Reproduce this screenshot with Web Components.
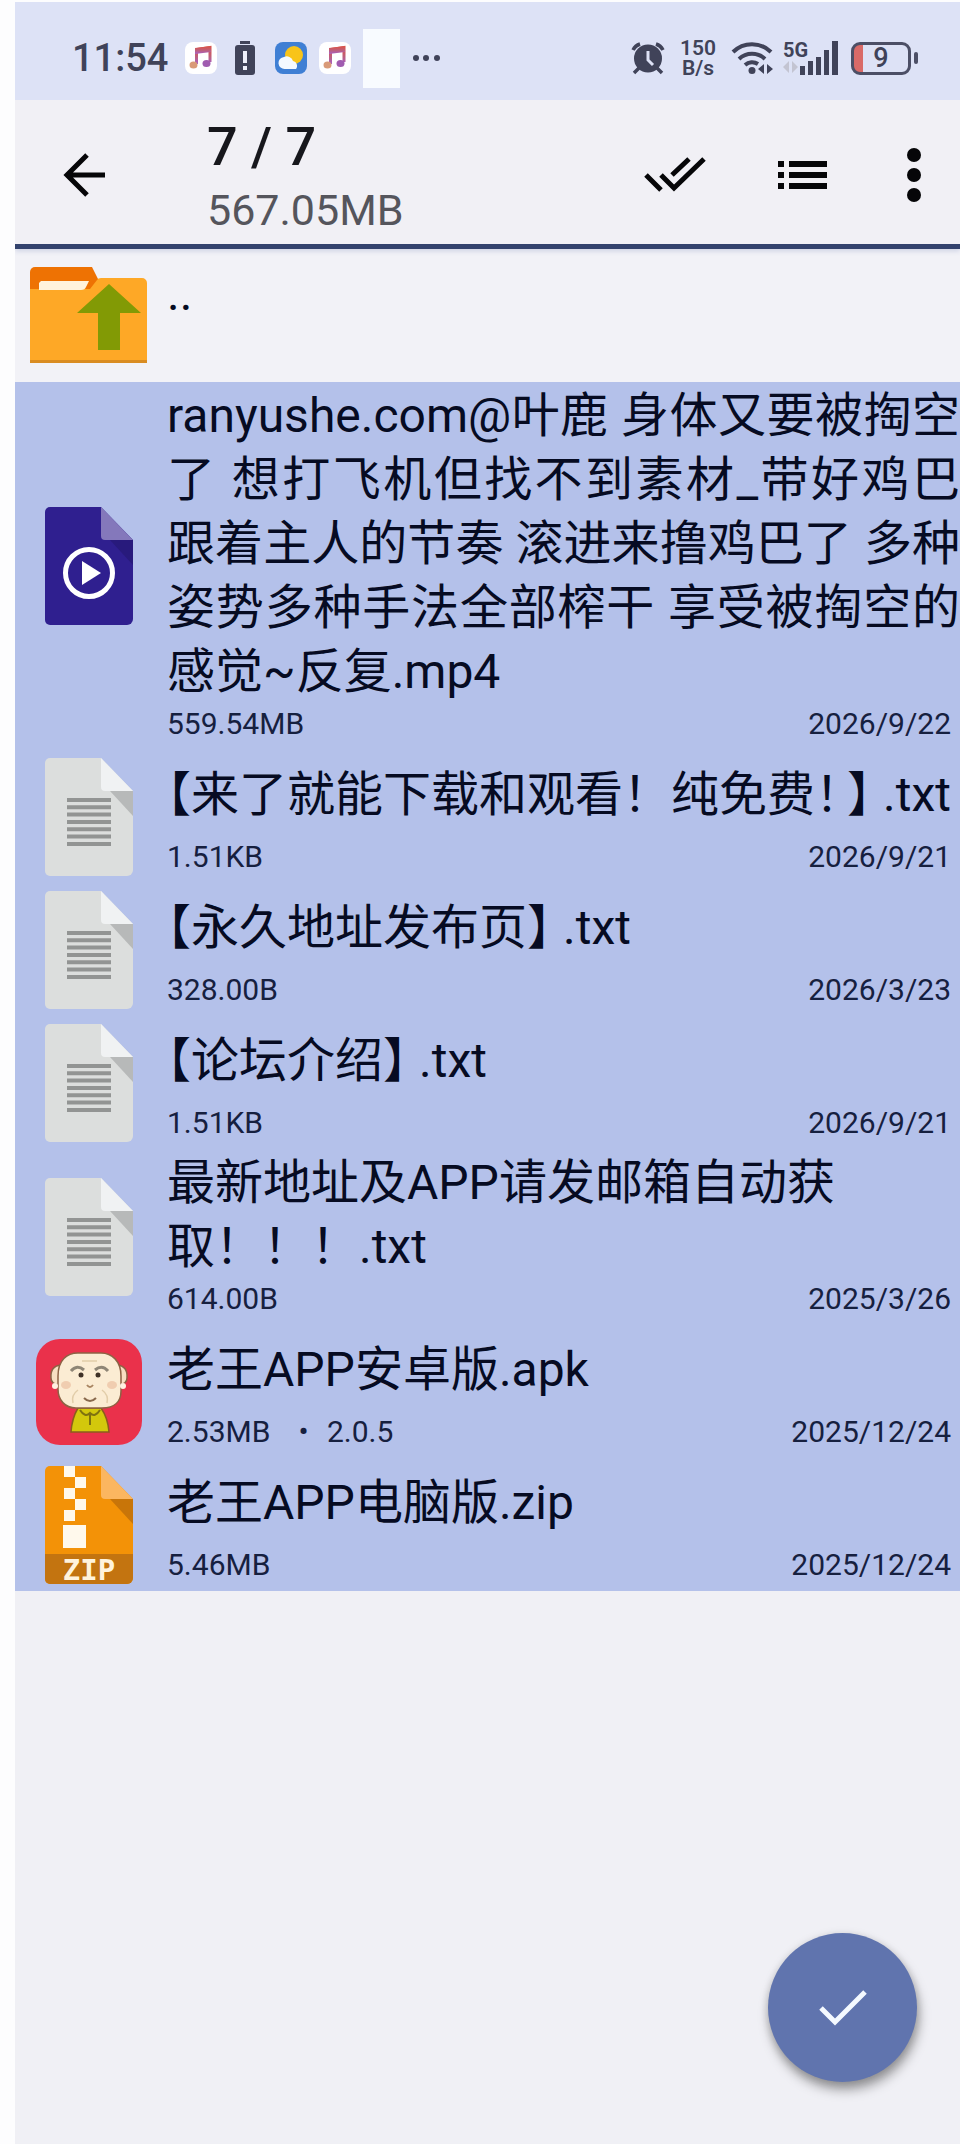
<!DOCTYPE html>
<html lang="zh-CN">
<head>
<meta charset="utf-8">
<meta name="viewport" content="width=device-width, initial-scale=1">
<title>文件选择</title>
<style>
  body { margin: 0; background: #fdfdfe; font-family: Roboto, "Noto Sans CJK SC", sans-serif; color: #060b22; text-autospace: no-autospace; text-spacing-trim: space-all; }
  .half { font-feature-settings: "halt"; }
  .half.mark { margin-inline-end: 8px; }
  .half.close { margin-inline-end: 12px; }
  .dot { margin-inline-end: 11px; }
</style>
</head>
<body>
<file-app>
  <status-bar slot="status"></status-bar>
  <selection-bar slot="header">
    <span slot="count">7 / 7</span>
    <span slot="size">567.05MB</span>
  </selection-bar>
  <file-row><file-icon slot="icon" kind="up"></file-icon>..</file-row>
  <file-row selected justified><file-icon slot="icon" kind="video"></file-icon>ranyushe.com@叶鹿 身体又要被掏空了 想打飞机但找不到素材_带好鸡巴 跟着主人的节奏 滚进来撸鸡巴了 多种姿势多种手法全部榨干 享受被掏空的感觉~反复.mp4<span slot="size">559.54MB</span><time slot="date">2026/9/22</time></file-row>
  <file-row selected><file-icon slot="icon" kind="text"></file-icon><span class="half">【</span>来了就能下载和观看！纯免费<span class="half mark">！</span><span class="half close">】</span>.txt<span slot="size">1.51KB</span><time slot="date">2026/9/21</time></file-row>
  <file-row selected><file-icon slot="icon" kind="text"></file-icon><span class="half">【</span>永久地址发布页<span class="half close">】</span>.txt<span slot="size">328.00B</span><time slot="date">2026/3/23</time></file-row>
  <file-row selected><file-icon slot="icon" kind="text"></file-icon><span class="half">【</span>论坛介绍<span class="half close">】</span>.txt<span slot="size">1.51KB</span><time slot="date">2026/9/21</time></file-row>
  <file-row selected><file-icon slot="icon" kind="text"></file-icon>最新地址及APP请发邮箱自动获取！！！.txt<span slot="size">614.00B</span><time slot="date">2025/3/26</time></file-row>
  <file-row selected><file-icon slot="icon" kind="apk"></file-icon>老王APP安卓版.apk<span slot="size">2.53MB</span><span slot="version"><span class="dot">• </span>2.0.5</span><time slot="date">2025/12/24</time></file-row>
  <file-row selected><file-icon slot="icon" kind="zip"></file-icon>老王APP电脑版.zip<span slot="size">5.46MB</span><time slot="date">2025/12/24</time></file-row>
  <confirm-button slot="action"></confirm-button>
</file-app>

<script>
  const define = (name, html, setup) => customElements.define(name, class extends HTMLElement {
    constructor() {
      super();
      this.attachShadow({ mode: 'open' }).innerHTML = html;
      if (setup) setup(this);
    }
  });

  define('file-app', `
    <style>
      :host { display: block; box-sizing: border-box; min-height: 100vh; padding: 2px 0 0 15px; background: linear-gradient(#f0f0f5, #f0f0f5) 15px 2px no-repeat, #fdfdfe; }
    </style>
    <slot name="status"></slot>
    <slot name="header"></slot>
    <main><slot></slot></main>
    <slot name="action"></slot>`);

  const note = (id) => `
    <svg width="32" height="32" viewBox="0 0 32 32" aria-hidden="true">
      <defs><linearGradient id="${id}" x1="0" y1="0" x2="0" y2="1"><stop offset=".1" stop-color="#d8544c"/><stop offset=".55" stop-color="#bd5f7c"/><stop offset="1" stop-color="#a85fc4"/></linearGradient></defs>
      <rect width="32" height="32" rx="8" fill="#fff"/>
      <path fill="none" stroke="url(#${id})" stroke-width="3" d="M11.500 22 V7.500 L25 5.500 V20"/>
      <path fill="url(#${id})" d="M10 6 26 4V10L10 12z"/>
      <ellipse cx="8.500" cy="23" rx="4" ry="3.500" fill="#d99a78"/>
      <ellipse cx="21.500" cy="21.500" rx="4" ry="3.500" fill="#a05cb0"/>
    </svg>`;

  define('status-bar', `
    <style>
      :host { display: flex; align-items: center; box-sizing: border-box; height: 98px; padding: 14px 42px 0 57px; background: #dde2f6; color: #404359; }
      svg { display: block; flex: none; }
      .clock { font-size: 38px; line-height: 40px; font-weight: 500; width: 113px; flex: none; }
      .left { display: flex; align-items: center; height: 60px; }
      .apps { display: flex; align-items: center; gap: 12px; }
      .blank { width: 37px; height: 59px; background: #f8fbff; }
      .right { display: flex; align-items: center; margin-left: auto; height: 36px; }
      .rate { font-size: 21px; font-weight: 600; text-align: center; width: 38px; margin: 0 14px; }
      .rate span { display: block; line-height: 20px; }
      .cell { display: grid; grid-template-columns: 16px 40px; margin-left: 10px; height: 34px; width: 56px; }
      .cell b { font-size: 20px; line-height: 18px; font-weight: 700; }
      .cell .bars { grid-column: 2; grid-row: 1 / 3; }
      .cell b, .cell .data { grid-column: 1; }
      .battery { display: flex; align-items: center; margin-left: 12px; gap: 3px; }
      .shell { box-sizing: border-box; width: 60px; height: 33px; border: 3px solid #4c4f66; border-radius: 9px; background: linear-gradient(90deg, #d96a68 9px, transparent 9px); font-size: 27px; line-height: 27px; text-align: center; font-weight: 500; }
      .nub { width: 4px; height: 12px; border-radius: 2px; background: #4c4f66; }
    </style>
    <div class="left">
      <span class="clock">11:54</span>
      <div class="apps">
        ${note('n1')}
        <svg width="34" height="36" viewBox="0 0 34 36" aria-hidden="true"><rect x="11" y="1" width="10" height="3" fill="#404359"/><rect x="6" y="5" width="20" height="30" rx="3" fill="#404359"/><path d="M16 11v12M16 26v4" stroke="#eef0fb" stroke-width="4"/></svg>
        <svg width="32" height="32" viewBox="0 0 32 32" aria-hidden="true"><rect width="32" height="32" rx="8" fill="#3f7fd4"/><circle cx="19" cy="13" r="9" fill="#f8c419"/><path d="M10 27a6 6 0 0 1-1-12 6.500 6.500 0 0 1 9 4 5 5 0 0 1 3 8z" fill="#f4f9ff"/></svg>
        ${note('n2')}
        <span class="blank"></span>
        <svg width="30" height="8" viewBox="0 0 30 8" aria-hidden="true" fill="#404359"><circle cx="4" cy="4" r="3"/><circle cx="14" cy="4" r="3"/><circle cx="25" cy="4" r="3"/></svg>
      </div>
    </div>
    <div class="right">
      <svg width="34" height="34" viewBox="0 0 34 34" aria-hidden="true"><circle cx="17" cy="17.500" r="14" fill="#404359"/><path d="M2 9a12 12 0 0 1 7-6M25 3a12 12 0 0 1 7 6M8 27l-5 5M26 27l5 5" stroke="#404359" stroke-width="3.500" fill="none"/><path d="M17 10v9l5 5" stroke="#dde2f6" stroke-width="3" fill="none"/></svg>
      <div class="rate"><span>150</span><span>B/s</span></div>
      <svg width="42" height="34" viewBox="0 0 42 34" aria-hidden="true"><g fill="none" stroke="#404359" stroke-width="4"><path d="M2 11a27 27 0 0 1 38 0"/><path d="M8 18a19 19 0 0 1 26 0"/><path d="M14 24a11 11 0 0 1 13-1"/></g><circle cx="21" cy="29.500" r="3.500" fill="#404359"/><path fill="#404359" d="M33 23v10l-6-5zM36 23v10l6-5z"/></svg>
      <div class="cell">
        <b>5G</b>
        <svg class="data" width="16" height="14" viewBox="0 0 16 14" aria-hidden="true"><path fill="#c3c4d2" d="M6 1v12L0 7zM9 1v12l6-6z"/></svg>
        <svg class="bars" width="40" height="34" viewBox="0 0 40 34" aria-hidden="true"><path fill="#404359" d="M1 25h5v9H1zM9 20h5v14H9zM17 16h5v18h-5zM25 9h5v25h-5zM33 0h6v34h-6z"/></svg>
      </div>
      <div class="battery"><div class="shell">9</div><span class="nub"></span></div>
    </div>`);

  define('selection-bar', `
    <style>
      :host { display: flex; align-items: center; box-sizing: border-box; height: 149px; padding: 6px 32px 0 48px; background: #f1f0f5; border-bottom: 5px solid #33426d; box-shadow: 0 2px 5px #cdd2e4; clip-path: inset(0 0 -8px 0); position: relative; color: #17171c; }
      button { border: 0; padding: 0; background: none; color: #060608; display: grid; place-items: center; height: 64px; }
      svg { display: block; }
      .text { margin-left: 100px; padding-top: 6px; flex: 1; }
      .count { display: block; font-size: 54px; line-height: 64px; font-weight: 500; }
      .size { display: block; font-size: 43px; line-height: 62px; color: #55555c; }
      .tools { display: flex; align-items: center; gap: 72px; }
    </style>
    <button aria-label="返回"><svg width="44" height="44" viewBox="0 0 44 44" fill="none" stroke="currentColor" stroke-width="5"><path d="M42 22H4M24 2 4 22l20 20"/></svg></button>
    <div class="text"><span class="count"><slot name="count"></slot></span><span class="size"><slot name="size"></slot></span></div>
    <div class="tools">
      <button aria-label="全选"><svg width="62" height="38" viewBox="0 0 62 38" fill="none" stroke="currentColor" stroke-width="5"><path d="M2 19 17 34M17 19 30 32 60 3M28 19 45 3"/></svg></button>
      <button aria-label="列表视图"><svg width="50" height="30" viewBox="0 0 50 30" fill="currentColor"><path d="M0 1h6v6H0zM11 1h38v6H11zM0 12h6v6H0zM11 12h38v6H11zM0 23h6v6H0zM11 23h38v6H11z"/></svg></button>
      <button aria-label="更多"><svg width="28" height="56" viewBox="0 0 28 56" fill="currentColor"><circle cx="14" cy="8" r="7"/><circle cx="14" cy="28" r="7"/><circle cx="14" cy="48" r="7"/></svg></button>
    </div>`);

  define('file-row', `
    <style>
      :host { display: grid; grid-template-columns: 118px minmax(0, 1fr); column-gap: 19px; align-items: center; box-sizing: border-box; min-height: 133px; padding: 2px 0 6px 15px; background: #f2f2f7; }
      :host([selected]) { background: #b4c1ea; }
      .icon { display: grid; justify-items: center; margin-bottom: -4px; }
      .name { display: flex; align-items: center; min-height: 85px; font-size: 48px; line-height: 64px; }
      .name div { flex: 1; min-width: 0; }
      :host([justified]) .name { text-align: justify; }
      .meta { display: flex; align-items: center; height: 40px; padding-right: 9px; font-size: 30px; line-height: 40px; color: #16203f; }
      .version { margin-left: 28px; }
      .date { margin-left: auto; }
    </style>
    <div class="icon"><slot name="icon"></slot></div>
    <div>
      <div class="name"><div><slot></slot></div></div>
      <div class="meta"><slot name="size"></slot><span class="version"><slot name="version"></slot></span><span class="date"><slot name="date"></slot></span></div>
    </div>`);

  const sheet = (fill, fold, shade, body) => `
    <svg width="88" height="118" viewBox="0 0 88 118" aria-hidden="true">
      <path fill="${fill}" d="M5 0H56L88 33V112a6 6 0 0 1-6 6H5a5 5 0 0 1-5-5V5a5 5 0 0 1 5-5z"/>
      <path fill="${shade}" d="M65 33H88V58z"/>
      <path fill="${fold}" d="M56 0 88 33H60a4 4 0 0 1-4-4z"/>
      ${body}
    </svg>`;

  const art = {
    up: `<svg width="118" height="97" viewBox="0 0 118 97" aria-hidden="true">
      <path fill="#ee7203" d="M5 0H62L69 14V30H0V5a5 5 0 0 1 5-5z"/>
      <path fill="#fea826" d="M0 22H60L67 13Q68 11 71 11H112a5 5 0 0 1 5 5V96H0z"/>
      <path fill="#ee7203" d="M0 14h64l-5 8H0z"/>
      <path fill="#fff3dc" d="M11 14H59L56 20Q55 23 51 23H9V16z"/>
      <path fill="#d98c22" d="M0 93H117V96H0z"/>
      <path fill="#829a05" d="M79 17 111 46H90V83H68V46H47z"/></svg>`,
    video: sheet('#2f1f8f', '#8478bb', '#281a7c', `<circle cx="44" cy="66" r="23.500" fill="none" stroke="#fff" stroke-width="5"/><path fill="#fff" d="M37 54V78L56 66z"/>`),
    text: sheet('#dcdedd', '#f0f2f3', '#b7b9b9', `<path stroke="#929493" stroke-width="4" d="M22 42H66M22 49.300H66M22 56.600H66M22 64H66M22 71.300H66M22 78.600H66M22 86H66"/>`),
    zip: sheet('#f39207', '#fbb660', '#c87509', `<path fill="#fff9ec" d="M19 0H30V11H19zM30 11H41V22H30zM19 22H30V33H19zM30 33H41V44H30zM19 44H30V55H19zM18 59H41V82H18z"/><path fill="#c37410" d="M0 88H88V112a6 6 0 0 1-6 6H5a5 5 0 0 1-5-5z"/><text x="44" y="114" text-anchor="middle" font-family="DejaVu Sans Mono" font-weight="700" font-size="29" fill="#fff3dc">ZIP</text>`),
    apk: `<svg width="108" height="108" viewBox="0 0 108 108" aria-hidden="true">
      <rect x="1" y="1" width="106" height="106" rx="24" fill="#ea314b"/>
      <path fill="#d3c80c" stroke="#8c5c1c" stroke-width="1.500" d="M43 70H66Q73 80 74 94H36Q37 80 43 70z"/>
      <path fill="none" stroke="#7e7210" stroke-width="2" d="M45 72q5 8 10 3 5 5 10-3M55 75V87"/>
      <g fill="#f8dfc2" stroke="#8d6244" stroke-width="1.500"><path d="M26 27Q15 28 16 40 16 46 24 47zM82 27Q93 28 92 40 92 46 84 47z"/><path d="M23 38C23 22 32 15 43 15H66C77 15 86 23 86 38V53C86 65 78 70 67 70H41C30 70 23 62 23 51z" fill="#fbecd3"/></g>
      <circle cx="20" cy="48" r="3" fill="#fff0e0"/><circle cx="88" cy="48" r="3" fill="#fff0e0"/>
      <path fill="none" stroke="#8f8676" stroke-width="3" d="M36 33Q42 26 49 32M60 32Q67 26 73 33"/>
      <circle cx="46" cy="37" r="2.500" fill="#3e3026"/><circle cx="63" cy="37" r="2.500" fill="#3e3026"/>
      <ellipse cx="31" cy="47" rx="5" ry="4" fill="#f0cdb0"/><ellipse cx="77" cy="47" rx="5" ry="4" fill="#f0cdb0"/>
      <path fill="none" stroke="#a98562" stroke-width="2" d="M52 47Q55 51 58 47"/>
      <path fill="none" stroke="#89694d" stroke-width="2" d="M49 60Q55 66 61 60"/>
      <path fill="none" stroke="#e2cda9" stroke-width="1.500" d="M38 65Q36 57 43 52M72 65Q74 57 67 52M47 23H62"/></svg>`
  };

  define('file-icon', `<style>:host { display: block; } svg { display: block; overflow: visible; }</style><div></div>`, (el) => {
    el.shadowRoot.querySelector('div').innerHTML = art[el.getAttribute('kind')];
  });

  define('confirm-button', `
    <style>
      :host { display: block; position: fixed; right: 43px; bottom: 62px; }
      button { display: grid; place-items: center; width: 149px; height: 149px; border: 0; padding: 0; border-radius: 50%; background: #6074ae; color: #f4f9ff; box-shadow: 2px 8px 12px #00000059, 0 2px 10px #00000026; }
    </style>
    <button aria-label="确认"><svg width="48" height="38" viewBox="0 0 48 38" fill="none" stroke="currentColor" stroke-width="5"><path d="M2 19 16 33 46 3"/></svg></button>`);
</script>
</body>
</html>
